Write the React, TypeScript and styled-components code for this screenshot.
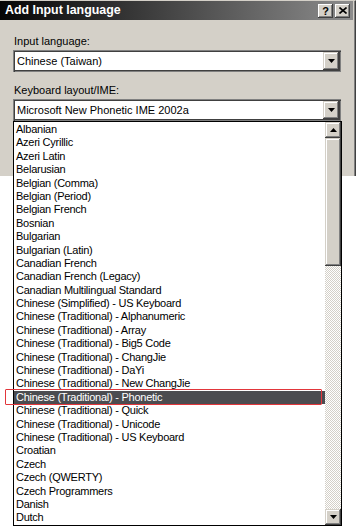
import React from 'react';
import styled, { createGlobalStyle } from 'styled-components';

const GlobalStyle = createGlobalStyle`
  html, body {
    margin: 0;
    padding: 0;
    background: #ffffff;
  }
  body {
    font-family: "Liberation Sans", Arial, sans-serif;
  }
`;

const layouts = [
  'Albanian',
  'Azeri Cyrillic',
  'Azeri Latin',
  'Belarusian',
  'Belgian (Comma)',
  'Belgian (Period)',
  'Belgian French',
  'Bosnian',
  'Bulgarian',
  'Bulgarian (Latin)',
  'Canadian French',
  'Canadian French (Legacy)',
  'Canadian Multilingual Standard',
  'Chinese (Simplified) - US Keyboard',
  'Chinese (Traditional) - Alphanumeric',
  'Chinese (Traditional) - Array',
  'Chinese (Traditional) - Big5 Code',
  'Chinese (Traditional) - ChangJie',
  'Chinese (Traditional) - DaYi',
  'Chinese (Traditional) - New ChangJie',
  'Chinese (Traditional) - Phonetic',
  'Chinese (Traditional) - Quick',
  'Chinese (Traditional) - Unicode',
  'Chinese (Traditional) - US Keyboard',
  'Croatian',
  'Czech',
  'Czech (QWERTY)',
  'Czech Programmers',
  'Danish',
  'Dutch',
];

const selected = 'Chinese (Traditional) - Phonetic';

function ArrowDown() {
  return (
    <svg width="7" height="4" viewBox="0 0 7 4">
      <path d="M0 0h7L3.5 4z" fill="#000" />
    </svg>
  );
}

function ArrowUp() {
  return (
    <svg width="7" height="4" viewBox="0 0 7 4">
      <path d="M0 4h7L3.5 0z" fill="#000" />
    </svg>
  );
}

function CloseGlyph() {
  return (
    <svg width="8" height="7" viewBox="0 0 8 7">
      <path d="M0.5 0.5l7 6M7.5 0.5l-7 6" stroke="#000" strokeWidth="1.6" />
    </svg>
  );
}

export default function App() {
  return (
    <Page>
      <GlobalStyle />
      <Window>
        <TitleBar>
          <Title>Add Input language</Title>
          <CaptionButtons>
            <CaptionButton>?</CaptionButton>
            <CaptionButton>
              <CloseGlyph />
            </CaptionButton>
          </CaptionButtons>
        </TitleBar>

        <Body>
          <Label>Input language:</Label>
          <Combo>
            <ComboText>Chinese (Taiwan)</ComboText>
            <RaisedButton>
              <ArrowDown />
            </RaisedButton>
          </Combo>

          <Label $spaced>Keyboard layout/IME:</Label>
          <ComboWrap>
            <Combo>
              <ComboText>Microsoft New Phonetic IME 2002a</ComboText>
              <RaisedButton>
                <ArrowDown />
              </RaisedButton>
            </Combo>

            <DropList>
              <Items>
                {layouts.map((name) => (
                  <Item key={name} $active={name === selected}>
                    {name}
                    {name === selected && <Marker />}
                  </Item>
                ))}
              </Items>
              <ScrollBar>
                <RaisedButton $square>
                  <ArrowUp />
                </RaisedButton>
                <Thumb />
                <Track />
                <RaisedButton $square>
                  <ArrowDown />
                </RaisedButton>
              </ScrollBar>
            </DropList>
          </ComboWrap>
        </Body>
      </Window>
    </Page>
  );
}

const Page = styled.div`
  position: relative;
  width: 356px;
  height: 528px;
  overflow: hidden;
  background: #ffffff;
`;

const Window = styled.div`
  position: relative;
  width: 356px;
  height: 176px;
  box-sizing: border-box;
  background: #d4d0c8;
  border-top: 1px solid #d4d0c8;
  border-right: 1px solid #404040;
  box-shadow: inset -1px 0 0 #808080;
`;

const TitleBar = styled.div`
  height: 19px;
  margin-right: 2px;
  padding: 0 3px 0 5px;
  display: flex;
  align-items: center;
  justify-content: space-between;
  background: linear-gradient(to right, #050505 0%, #3a3a3a 40%, #8c8c8c 100%);
`;

const Title = styled.span`
  color: #ffffff;
  font-family: "Liberation Sans", Arial, sans-serif;
  font-weight: bold;
  font-size: 12.4px;
  line-height: 19px;
`;

const CaptionButtons = styled.div`
  display: flex;
  gap: 2px;
`;

const CaptionButton = styled.div`
  width: 15px;
  height: 14px;
  box-sizing: border-box;
  display: flex;
  align-items: center;
  justify-content: center;
  background: #d4d0c8;
  box-shadow: inset -1px -1px 0 #404040, inset 1px 1px 0 #ffffff,
    inset -2px -2px 0 #808080;
  font-family: "Liberation Sans", Arial, sans-serif;
  font-weight: bold;
  font-size: 11px;
  color: #000;
`;

const Body = styled.div`
  padding: 15px 0 0 13px;
`;

const Label = styled.div<{ $spaced?: boolean }>`
  height: 13px;
  margin: ${({ $spaced }) => ($spaced ? '12px' : '0')} 0 2px 1px;
  font-size: 11px;
  line-height: 13px;
  color: #000;
`;

const ComboWrap = styled.div`
  position: relative;
  width: 328px;
  z-index: 2;
`;

const Combo = styled.div`
  width: 328px;
  height: 22px;
  box-sizing: border-box;
  padding: 2px;
  display: flex;
  align-items: center;
  background: #ffffff;
  box-shadow: inset 1px 1px 0 #808080, inset 2px 2px 0 #404040,
    inset -1px -1px 0 #808080, inset -2px -2px 0 #404040;
`;

const ComboText = styled.span`
  flex: 1;
  padding-left: 2px;
  font-size: 11px;
  line-height: 18px;
  color: #000;
  white-space: nowrap;
`;

const RaisedButton = styled.div<{ $square?: boolean }>`
  width: 16px;
  height: ${({ $square }) => ($square ? '16px' : '18px')};
  flex: none;
  box-sizing: border-box;
  display: flex;
  align-items: center;
  justify-content: center;
  background: #d4d0c8;
  box-shadow: inset -1px -1px 0 #404040, inset 1px 1px 0 #d4d0c8,
    inset -2px -2px 0 #808080, inset 2px 2px 0 #ffffff;
`;

const DropList = styled.div`
  position: absolute;
  top: 100%;
  left: 0;
  width: 329px;
  height: 405px;
  box-sizing: border-box;
  display: flex;
  background: #ffffff;
  border: 1px solid #000;
`;

const Items = styled.div`
  flex: 1;
  padding-top: 1px;
`;

const Item = styled.div<{ $active?: boolean }>`
  position: relative;
  height: 13.4px;
  padding-left: 2px;
  font-size: 11px;
  line-height: 13.4px;
  letter-spacing: -0.25px;
  white-space: nowrap;
  color: ${({ $active }) => ($active ? '#ffffff' : '#000000')};
  background: ${({ $active }) => ($active ? '#4b4c50' : 'transparent')};
`;

const Marker = styled.span`
  position: absolute;
  top: -2px;
  bottom: -1px;
  left: -9px;
  right: 3px;
  border: 1.5px solid #e2363b;
  border-radius: 1px;
`;

const ScrollBar = styled.div`
  width: 16px;
  display: flex;
  flex-direction: column;
`;

const Thumb = styled.div`
  height: 128px;
  flex: none;
  box-sizing: border-box;
  background: #d4d0c8;
  box-shadow: inset -1px -1px 0 #404040, inset 1px 1px 0 #d4d0c8,
    inset -2px -2px 0 #808080, inset 2px 2px 0 #ffffff;
`;

const Track = styled.div`
  flex: 1;
  background: repeating-conic-gradient(#d4d0c8 0 25%, #ffffff 0 50%) 0 0 / 2px 2px;
`;
